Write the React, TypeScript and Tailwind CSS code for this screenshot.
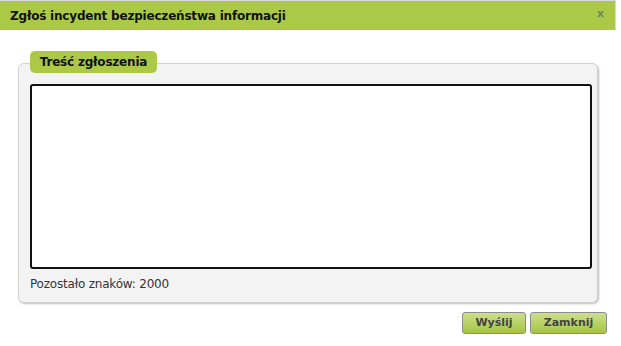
export default function App() {
  return (
    <div className="w-[621px] h-[346px] bg-white" style={{ fontFamily: '"DejaVu Sans", Verdana, sans-serif' }}>
      <div className="w-[616px] border-t border-r border-[#d9d9d9]">
        {/* nagłówek */}
        <div className="h-[29px] bg-[#abc946] flex items-center justify-between pl-[10px] pr-[11px]">
          <span className="text-[12px] font-bold text-[#111] tracking-[-0.2px]">
            Zgłoś incydent bezpieczeństwa informacji
          </span>
          <span className="text-[11px] font-bold text-[#6b8a62] leading-none -mt-[4px]">x</span>
        </div>
      </div>

      <div className="pl-[18px] pr-[23px] pt-[33px]">
        <div className="relative h-[240px] bg-[#f3f3f3] border border-[#d2d2d2] rounded-[6px] shadow-[1px_1px_2px_rgba(0,0,0,0.25)] pt-[20px] pl-[11px] pr-[5px]">
          <div className="absolute -top-[13px] left-[11px] h-[22px] w-[127px] rounded-[5px] bg-[#abc946] flex items-center justify-center text-[12px] font-bold text-[#111] tracking-[-0.2px]">
            Treść zgłoszenia
          </div>
          <textarea className="block w-[562px] h-[185px] bg-white border-2 border-[#111] rounded-[3px] resize-none outline-none" />
          <div className="mt-[7px] text-[12px] text-[#333] leading-[16px] tracking-[-0.2px]">Pozostało znaków: 2000</div>
        </div>
      </div>

      <div className="flex justify-end gap-[4px] pr-[14px] mt-[9px]">
        <button className="w-[64px] h-[22px] rounded-[3px] border border-[#8c8c8c] bg-gradient-to-b from-[#cde08a] to-[#a6c440] text-[11px] font-bold text-[#444]">
          Wyślij
        </button>
        <button className="w-[77px] h-[22px] rounded-[3px] border border-[#8c8c8c] bg-gradient-to-b from-[#cde08a] to-[#a6c440] text-[11px] font-bold text-[#444]">
          Zamknij
        </button>
      </div>
    </div>
  );
}
